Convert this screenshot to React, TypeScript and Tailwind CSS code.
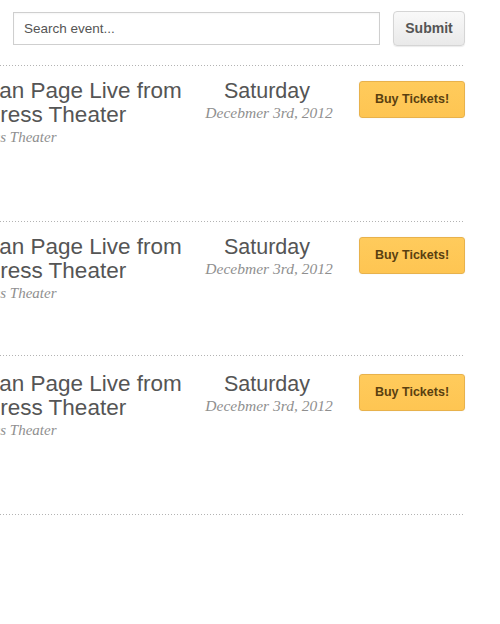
import React from "react";

const events = [
  { title: "Morgan Page Live from Empress Theater", venue: "Empress Theater", h: "h-[156px]", pt: "pt-[13px]" },
  { title: "Morgan Page Live from Empress Theater", venue: "Empress Theater", h: "h-[134px]", pt: "pt-[13px]" },
  { title: "Morgan Page Live from Empress Theater", venue: "Empress Theater", h: "h-[159px]", pt: "pt-[16px]" },
];

function Dots() {
  return (
    <div className="h-px w-full bg-[linear-gradient(to_right,#b3b3b3_1px,transparent_1px)] bg-[length:3px_1px] bg-repeat-x" />
  );
}

export default function App() {
  return (
    <div className="w-[500px] h-[624px] overflow-hidden bg-white font-['Liberation_Sans',Arial,sans-serif]">
      <div className="flex items-center gap-[13px] pl-[13px] pt-[11px] h-[46px]">
        <input
          type="text"
          placeholder="Search event..."
          className="w-[367px] h-[33px] border border-[#cfcfcf] bg-white px-[10px] text-[13.5px] text-[#555] placeholder:text-[#555] outline-none shadow-[inset_0_1px_2px_rgba(0,0,0,0.04)]"
        />
        <button className="w-[72px] h-[35px] rounded-[4px] border border-[#d5d5d5] bg-[linear-gradient(to_bottom,#f9f9f9,#e9e9e9)] text-[14px] font-bold text-[#555] shadow-[0_1px_1px_rgba(0,0,0,0.08)]">
          Submit
        </button>
      </div>
      <div className="mt-[19px] w-[465px]">
        {events.map((e, i) => (
          <div key={i} className={`flex flex-col ${e.h}`}>
            <Dots />
            <div className={`flex ${e.pt}`}>
              <div className="-ml-[46px] w-[246px] shrink-0">
                <div className="indent-[-6px] text-[22.5px] leading-[24px] text-[#555]">{e.title}</div>
                <div className="mt-px ml-px text-[15px] leading-[18px] italic text-[#8f8f8f] font-['Liberation_Serif',Georgia,serif]">
                  {e.venue}
                </div>
              </div>
              <div className="w-[138px] shrink-0 text-center">
                <div className="-ml-[4px] text-[21.5px] leading-[24px] text-[#555]">Saturday</div>
                <div className="mt-px whitespace-nowrap text-[15.5px] leading-[18px] italic text-[#8f8f8f] font-['Liberation_Serif',Georgia,serif]">
                  Decebmer 3rd, 2012
                </div>
              </div>
              <div className="flex flex-1 justify-end">
                <button className="mt-[2px] w-[106px] h-[37px] rounded-[3px] border border-[#e8b24c] bg-[linear-gradient(to_bottom,#ffcb5c,#fec552)] text-[12.5px] font-bold text-[#5a3f10] shadow-[0_0_2px_rgba(0,0,0,0.06)]">
                  Buy Tickets!
                </button>
              </div>
            </div>
          </div>
        ))}
        <Dots />
      </div>
    </div>
  );
}
